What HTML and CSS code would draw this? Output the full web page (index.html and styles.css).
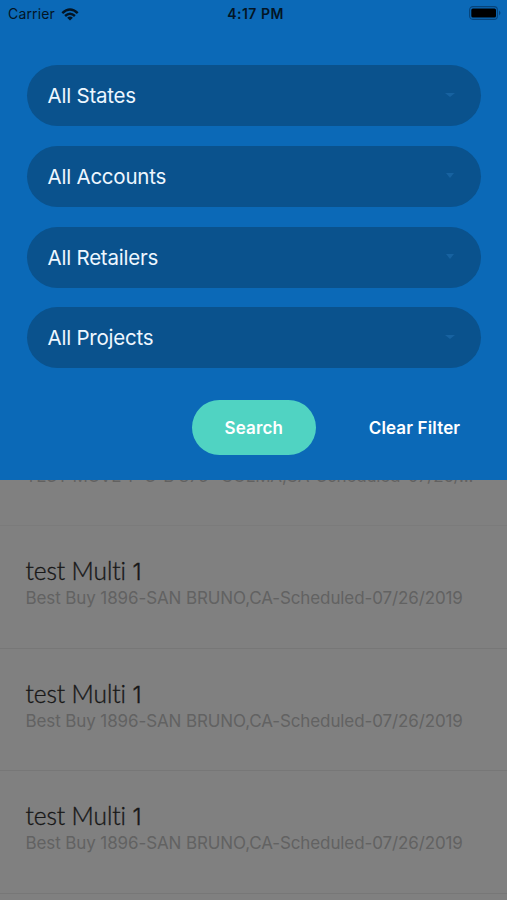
FILE: index.html
```html
<!DOCTYPE html>
<html lang="en">
<head>
<meta charset="utf-8">
<title>Project filter</title>
<link rel="stylesheet" href="styles.css">
</head>
<body>
<div class="screen">
  <section class="panel">
    <header class="status">
      <div class="carrier"><span>Carrier</span>
        <svg class="wifi" width="18" height="13" viewBox="0 0 18 13" fill="none" stroke="#031525" stroke-width="2.5"><path d="M1.3 5.1Q9-2 16.7 5.1M4.1 8Q9 3.6 13.9 8"/><path d="M9 12.6 6.1 9.7Q9 7.3 11.9 9.7Z" fill="#031525" stroke="none"/></svg>
      </div>
      <span class="time">4:17 PM</span>
      <svg class="battery" width="33" height="14" viewBox="0 0 33 14"><rect x=".6" y=".6" width="27.8" height="12.8" rx="3.4" fill="none" stroke="#07447a" stroke-width="1.1"/><rect x="2.3" y="2.4" width="24.7" height="9.2" rx="1.5" fill="#000"/><path d="M30 4.6q3 2.4 0 4.8z" fill="#07447a"/></svg>
    </header>
    <form class="filters">
      <div class="field"><span>All States</span><svg class="arrow" width="10" height="4" viewBox="0 0 10 4"><path d="M0 0h10L5 4z"/></svg></div>
      <div class="field"><span>All Accounts</span><svg class="arrow" width="10" height="5" viewBox="0 0 10 5"><path d="M1 0h8L5 5z"/></svg></div>
      <div class="field"><span>All Retailers</span><svg class="arrow" width="10" height="5" viewBox="0 0 10 5"><path d="M1 0h8L5 5z"/></svg></div>
      <div class="field"><span>All Projects</span><svg class="arrow" width="10" height="4" viewBox="0 0 10 4"><path d="M0 0h10L5 4z"/></svg></div>
    </form>
    <div class="actions">
      <button class="search" type="button">Search</button>
      <button class="clear" type="button">Clear Filter</button>
    </div>
  </section>
  <main class="list">
    <article class="row first"><h2>&nbsp;</h2><p>TEST MOVE 1- S-B 375- COLMA,CA-Scheduled-07/26/...</p></article>
    <article class="row"><h2>test Multi <span class="digit">1</span></h2><p>Best Buy 1896-SAN BRUNO,CA-Scheduled-07/26/2019</p></article>
    <article class="row"><h2>test Multi <span class="digit">1</span></h2><p>Best Buy 1896-SAN BRUNO,CA-Scheduled-07/26/2019</p></article>
    <article class="row"><h2>test Multi <span class="digit">1</span></h2><p>Best Buy 1896-SAN BRUNO,CA-Scheduled-07/26/2019</p></article>
  </main>
</div>
</body>
</html>
```
FILE: styles.css
```css
* { box-sizing: border-box; }
body { margin: 0; background: #808080; font-family: Inter, "Liberation Sans", sans-serif; }
.screen { height: 900px; overflow: hidden; background: #808080; }
.panel { position: relative; z-index: 1; height: 479.6px; background: #0b69b7; }
.status { height: 65px; padding: 6px 6px 0 8px; display: grid; grid-template-columns: 1fr auto 1fr; align-items: start; color: #031525; font-size: 14px; line-height: 16px; }
.carrier { display: flex; gap: 6px; align-items: center; letter-spacing: .15px; }
.wifi { display: block; }
.time { font-weight: 600; letter-spacing: .5px; padding-left: 2px; }
.battery { justify-self: end; margin-right: -1px; }
.filters { display: flex; flex-direction: column; gap: 19.8px; padding: 0 26.5px; }
.field { height: 61px; padding: 1px 26px 0 21px; border-radius: 31px; background: #0a528d; color: #eef7ff; display: flex; align-items: center; justify-content: space-between; font-size: 20.5px; line-height: 28px; letter-spacing: -.22px; }
.arrow { fill: #1762a0; position: relative; top: -1px; }
.actions { display: flex; padding: 32px 20px 0 192px; gap: 27px; }
button { height: 55px; border: 0; padding: 0; border-radius: 28px; background: transparent; color: #fff; font: 600 17px/24px Inter, "Liberation Sans", sans-serif; letter-spacing: .15px; }
.search { width: 123.5px; background: #50d3c2; }
.clear { width: 144px; }
.list { margin-top: -75.6px; }
.row { height: 122.4px; padding: 30px 25.5px 0; border-bottom: 1px solid #777; }
.row.first { border-color: #7b7b7b; }
.row h2 { height: 30px; margin: 0 0 1px; font: 300 24.5px/30px Lato, sans-serif; letter-spacing: -.1px; color: #171717; font-variant-ligatures: none; -webkit-text-stroke: .35px #171717; }
.digit { font-family: Inter, sans-serif; font-size: 23px; line-height: 1; }
.row p { margin: 0; font-size: 17px; line-height: 22px; color: #626262; white-space: nowrap; letter-spacing: -.11px; }
.row.first p { letter-spacing: -.19px; }
```
